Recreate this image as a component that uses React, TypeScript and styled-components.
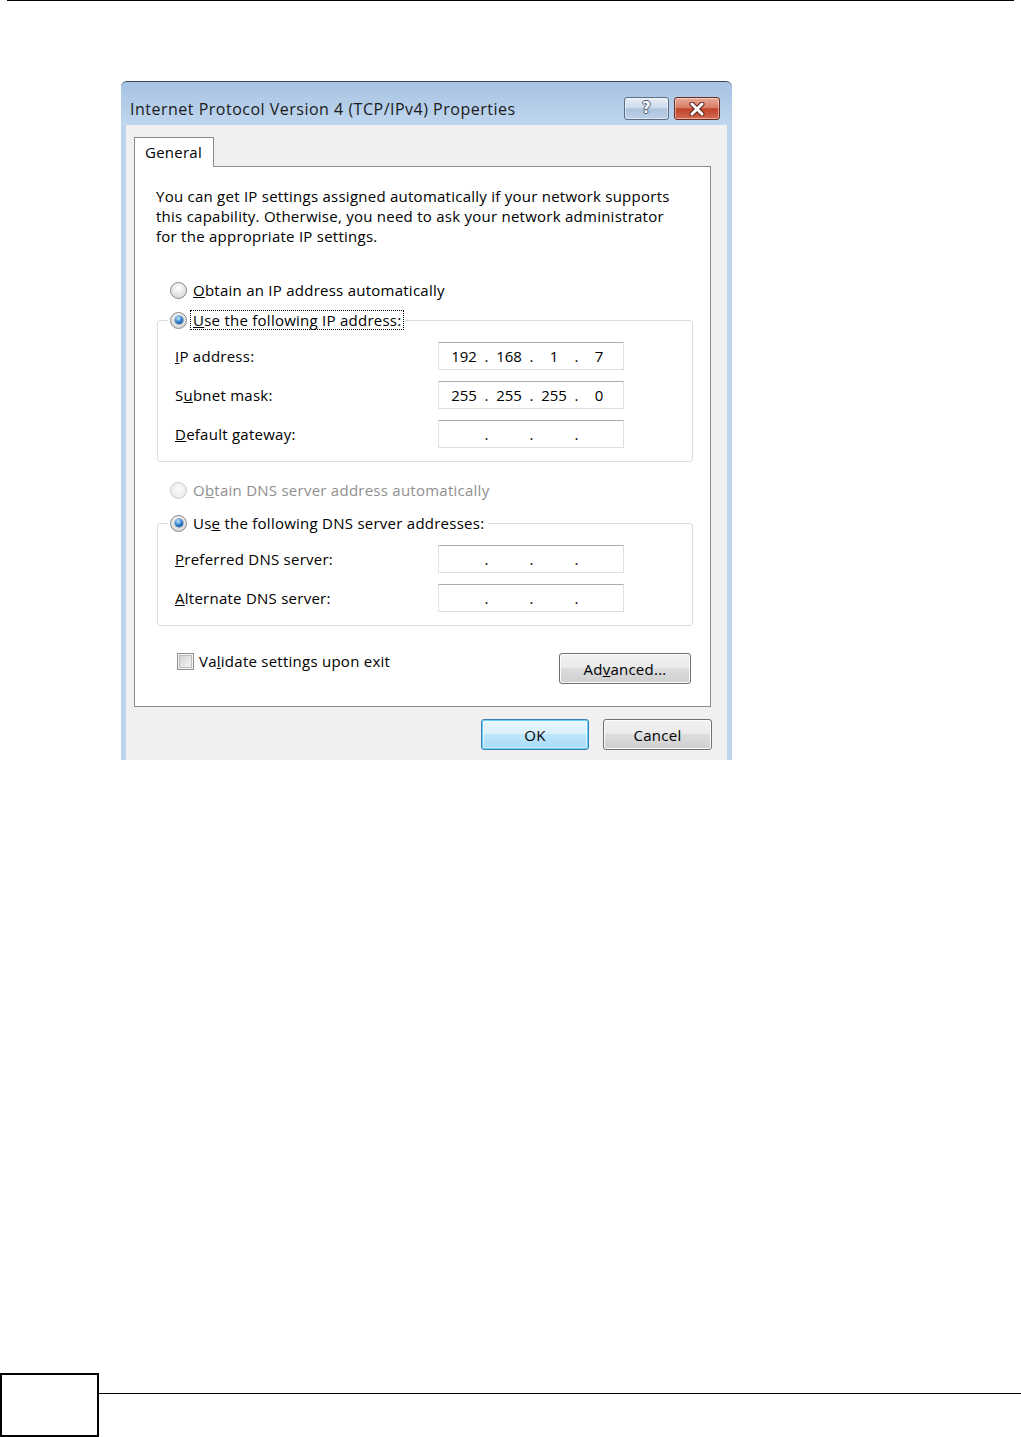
import React from 'react'
import styled, { createGlobalStyle } from 'styled-components'

const GlobalStyle = createGlobalStyle`
    html, body {
        margin: 0;
        padding: 0;
        background: #fff;
    }
    body {
        font-family: "Open Sans", "DejaVu Sans", sans-serif;
        font-size: 15px;
        letter-spacing: 0.25px;
        color: #000;
    }
`

const Page = styled.div`
    width: 1021px;
    height: 1437px;
    display: flex;
    flex-direction: column;
    overflow: hidden;
`

const TopRule = styled.div`
    height: 1px;
    margin: 0 7px;
    background: #000;
`

const Content = styled.div`
    flex: 1;
    padding: 80px 0 0 121px;
`

const Footer = styled.div`
    display: flex;
    align-items: flex-start;
    height: 64px;
`

const PageBox = styled.div`
    width: 99px;
    height: 64px;
    box-sizing: border-box;
    border: 2px solid #000;
`

const FooterRule = styled.div`
    flex: 1;
    margin-top: 20px;
    border-top: 1px solid #000;
`

const Window = styled.div`
    width: 611px;
    height: 679px;
    box-sizing: border-box;
    border-top: 1px solid #3b4656;
    border-radius: 6px 6px 0 0;
    background: linear-gradient(#a7c3e3, #bfd6ee 43px, #bcd4ed 44px, #bcd4ed);
    padding: 0 5px;
    display: flex;
    flex-direction: column;
`

const TitleBar = styled.div`
    height: 43px;
    box-sizing: border-box;
    padding: 15px 7px 0 4px;
    display: flex;
    align-items: flex-start;
`

const Title = styled.div`
    flex: 1;
    height: 23px;
    line-height: 24px;
    font-size: 16px;
    letter-spacing: 0.5px;
    color: #1b1b1b;
    white-space: nowrap;
`

const CaptionButtons = styled.div`
    display: flex;
    gap: 5px;
`

const CaptionButton = styled.div<{ $close?: boolean }>`
    width: ${p => (p.$close ? 46 : 45)}px;
    height: 23px;
    box-sizing: border-box;
    border-radius: 3px;
    border: 1px solid ${p => (p.$close ? '#6b2a20' : '#5d6d82')};
    background: ${p =>
        p.$close
            ? 'linear-gradient(#e9a998, #d77e66 45%, #c1432b 52%, #d26a4f)'
            : 'linear-gradient(#e8eff8, #cddcee 45%, #adc3dc 52%, #bcd1e8)'};
    box-shadow: inset 0 0 0 1px rgba(255, 255, 255, 0.45);
    display: flex;
    align-items: center;
    justify-content: center;
`

const HelpGlyph = styled.span`
    font-family: "DejaVu Sans", sans-serif;
    font-weight: bold;
    font-size: 15px;
    line-height: 1;
    color: #fff;
    text-shadow: -1px 0 #4a5a70, 1px 0 #4a5a70, 0 -1px #4a5a70, 0 1px #4a5a70;
`

const Client = styled.div`
    flex: 1;
    background: #f0f0f0;
    padding: 12px 16px 0 8px;
    display: flex;
    flex-direction: column;
`

const TabStrip = styled.div`
    display: flex;
    height: 30px;
`

const Tab = styled.div`
    width: 80px;
    height: 30px;
    box-sizing: border-box;
    padding: 0 0 0 10px;
    line-height: 28px;
    border: 1px solid #898c95;
    border-bottom: none;
    background: #fff;
    position: relative;
    z-index: 1;
`

const Panel = styled.div`
    height: 541px;
    box-sizing: border-box;
    margin-top: -1px;
    border: 1px solid #898c95;
    background: #fff;
    padding: 19px 17px 0 21px;
    display: flex;
    flex-direction: column;
`

const Intro = styled.p`
    margin: 0;
    line-height: 20px;
`

const RadioRow = styled.div<{ $top?: number }>`
    display: flex;
    align-items: center;
    height: 20px;
    margin: ${p => p.$top ?? 0}px 0 0 14px;
    gap: 4px;
`

const RadioCircle = styled.span<{ $checked?: boolean; $disabled?: boolean }>`
    width: 15px;
    height: 15px;
    flex: none;
    border-radius: 50%;
    border: 1px solid ${p => (p.$disabled ? '#c9c9c9' : '#8a8a8a')};
    background: ${p =>
        p.$disabled
            ? 'radial-gradient(circle at 50% 40%, #fbfbfb, #ececec 70%)'
            : 'radial-gradient(circle at 50% 35%, #ffffff, #e2e2e2 60%, #c9c9c9)'};
    display: flex;
    align-items: center;
    justify-content: center;
    &::after {
        content: '';
        display: ${p => (p.$checked ? 'block' : 'none')};
        width: 8px;
        height: 8px;
        border-radius: 50%;
        background: radial-gradient(circle at 40% 30%, #c4ecff, #2c7fcf 50%, #0c3f7c);
        box-shadow: 0 0 0 1px rgba(20, 60, 110, 0.35);
    }
`

const OptionLabel = styled.span<{ $focus?: boolean; $disabled?: boolean }>`
    padding: 0 2px;
    line-height: 18px;
    white-space: nowrap;
    color: ${p => (p.$disabled ? '#8f8f8f' : '#000')};
    outline: ${p => (p.$focus ? '1px dotted #000' : 'none')};
    outline-offset: 0;
`

const Group = styled.fieldset<{ $top: number; $pb: number }>`
    margin: ${p => p.$top}px 0 0 1px;
    border: 1px solid #d5dfe5;
    border-radius: 3px;
    padding: 0 0 ${p => p.$pb}px 10px;
    min-width: 0;
`

const Legend = styled.legend`
    padding: 0 2px;
    display: flex;
    align-items: center;
    height: 20px;
    gap: 4px;
`

const Fields = styled.div<{ $pt: number }>`
    display: grid;
    grid-template-columns: 263px 186px;
    row-gap: 11px;
    align-items: center;
    padding: ${p => p.$pt}px 0 0 7px;
`

const FieldLabel = styled.span`
    white-space: nowrap;
`

const IpBox = styled.div`
    width: 186px;
    height: 28px;
    box-sizing: border-box;
    border: 1px solid #dbdfe6;
    border-top-color: #abadb3;
    border-left-color: #e2e3ea;
    background: #fff;
    padding-left: 7px;
    display: grid;
    grid-template-columns: 36px 9px 36px 9px 36px 9px 36px;
    align-items: center;
    text-align: center;
    line-height: 26px;
    letter-spacing: 0;
`

const BottomRow = styled.div`
    display: flex;
    justify-content: space-between;
    align-items: flex-start;
    margin-top: 25px;
`

const CheckItem = styled.div`
    display: flex;
    align-items: center;
    height: 20px;
    margin-left: 21px;
    gap: 3px;
`

const CheckBox = styled.span`
    width: 15px;
    height: 15px;
    flex: none;
    border: 1px solid #8e8f8f;
    background: linear-gradient(135deg, #d0d0d0, #f7f7f7);
    box-shadow: inset 0 0 0 1px #f4f4f4, inset 0 0 0 2px #bdbdbd;
`

const Button = styled.button<{ $default?: boolean; $w: number }>`
    width: ${p => p.$w}px;
    height: 31px;
    box-sizing: border-box;
    padding: 0;
    border-radius: 3px;
    border: 1px solid ${p => (p.$default ? '#3c7fb1' : '#707070')};
    background: ${p =>
        p.$default
            ? 'linear-gradient(#eaf6fd, #d9f0fc 49%, #bee6fd 50%, #a7d9f5)'
            : 'linear-gradient(#f2f2f2, #ebebeb 49%, #dddddd 50%, #cfcfcf)'};
    box-shadow: ${p =>
        p.$default
            ? 'inset 0 0 0 1px #61d0f6, inset 0 0 0 2px rgba(255,255,255,0.5)'
            : 'inset 0 0 0 1px #fbfbfb'};
    font-family: "Open Sans", "DejaVu Sans", sans-serif;
    font-size: 15px;
    letter-spacing: 0.25px;
    color: #000;
`

const AdvancedButton = styled(Button)`
    margin: 2px 2px 0 0;
`

const DialogButtons = styled.div`
    display: flex;
    justify-content: flex-end;
    gap: 14px;
    margin: 12px -1px 0 0;
`

const ipRows1 = [
    { label: <><u>I</u>P address:</>, value: ['192', '168', '1', '7'] },
    { label: <>S<u>u</u>bnet mask:</>, value: ['255', '255', '255', '0'] },
    { label: <><u>D</u>efault gateway:</>, value: ['', '', '', ''] },
]

const ipRows2 = [
    { label: <><u>P</u>referred DNS server:</>, value: ['', '', '', ''] },
    { label: <><u>A</u>lternate DNS server:</>, value: ['', '', '', ''] },
]

const IpField = ({ value }: { value: string[] }) => (
    <IpBox>
        {value.map((v, i) => (
            <React.Fragment key={i}>
                {i > 0 && <span>.</span>}
                <span>{v}</span>
            </React.Fragment>
        ))}
    </IpBox>
)

const CloseGlyph = () => (
    <svg width="20" height="14" viewBox="0 0 20 14">
        <path d="M5 2 L15 12 M15 2 L5 12" stroke="#5a1f16" strokeWidth="5" strokeLinecap="round" />
        <path d="M5 2 L15 12 M15 2 L5 12" stroke="#fff" strokeWidth="3" strokeLinecap="round" />
    </svg>
)

const App = () => {
    return (
        <Page>
            <GlobalStyle />
            <TopRule />
            <Content>
                <Window>
                    <TitleBar>
                        <Title>Internet Protocol Version 4 (TCP/IPv4) Properties</Title>
                        <CaptionButtons>
                            <CaptionButton>
                                <HelpGlyph>?</HelpGlyph>
                            </CaptionButton>
                            <CaptionButton $close>
                                <CloseGlyph />
                            </CaptionButton>
                        </CaptionButtons>
                    </TitleBar>
                    <Client>
                        <TabStrip>
                            <Tab>General</Tab>
                        </TabStrip>
                        <Panel>
                            <Intro>
                                You can get IP settings assigned automatically if your network supports
                                <br />
                                this capability. Otherwise, you need to ask your network administrator
                                <br />
                                for the appropriate IP settings.
                            </Intro>
                            <RadioRow $top={34}>
                                <RadioCircle />
                                <OptionLabel><u>O</u>btain an IP address automatically</OptionLabel>
                            </RadioRow>
                            <Group $top={10} $pb={13}>
                                <Legend>
                                    <RadioCircle $checked />
                                    <OptionLabel $focus><u>U</u>se the following IP address:</OptionLabel>
                                </Legend>
                                <Fields $pt={12}>
                                    {ipRows1.map((r, i) => (
                                        <React.Fragment key={i}>
                                            <FieldLabel>{r.label}</FieldLabel>
                                            <IpField value={r.value} />
                                        </React.Fragment>
                                    ))}
                                </Fields>
                            </Group>
                            <RadioRow $top={18}>
                                <RadioCircle $disabled />
                                <OptionLabel $disabled>O<u>b</u>tain DNS server address automatically</OptionLabel>
                            </RadioRow>
                            <Group $top={13} $pb={13}>
                                <Legend>
                                    <RadioCircle $checked />
                                    <OptionLabel>Us<u>e</u> the following DNS server addresses:</OptionLabel>
                                </Legend>
                                <Fields $pt={12}>
                                    {ipRows2.map((r, i) => (
                                        <React.Fragment key={i}>
                                            <FieldLabel>{r.label}</FieldLabel>
                                            <IpField value={r.value} />
                                        </React.Fragment>
                                    ))}
                                </Fields>
                            </Group>
                            <BottomRow>
                                <CheckItem>
                                    <CheckBox />
                                    <OptionLabel>Va<u>l</u>idate settings upon exit</OptionLabel>
                                </CheckItem>
                                <AdvancedButton $w={132}>Ad<u>v</u>anced...</AdvancedButton>
                            </BottomRow>
                        </Panel>
                        <DialogButtons>
                            <Button $default $w={108}>OK</Button>
                            <Button $w={109}>Cancel</Button>
                        </DialogButtons>
                    </Client>
                </Window>
            </Content>
            <Footer>
                <PageBox />
                <FooterRule />
            </Footer>
        </Page>
    )
}

export default App
